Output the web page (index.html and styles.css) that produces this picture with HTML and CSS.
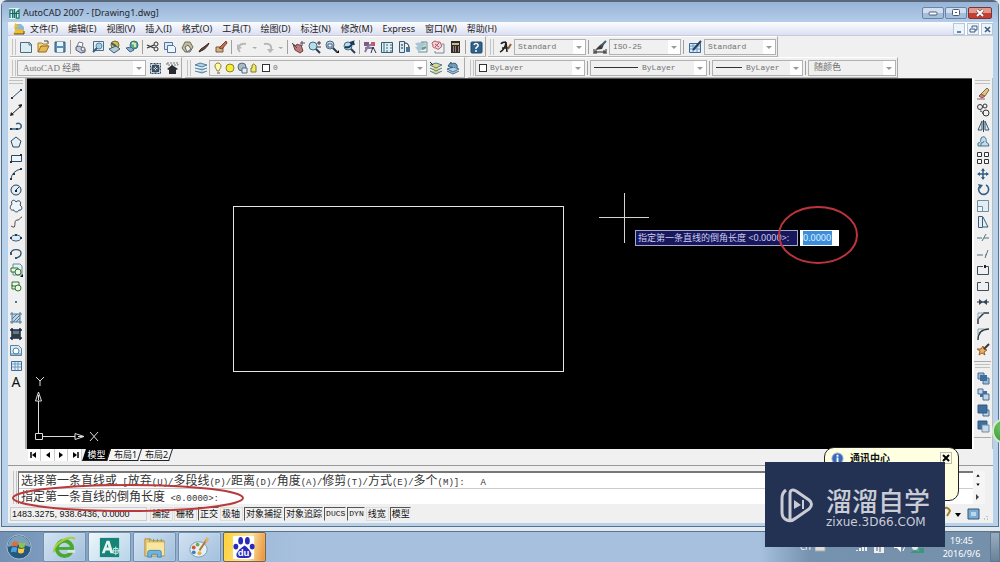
FILE: index.html
```html
<!DOCTYPE html>
<html lang="zh-CN">
<head>
<meta charset="utf-8">
<title>AutoCAD 2007 - [Drawing1.dwg]</title>
<link rel="stylesheet" href="styles.css">
</head>
<body>
<main class="window">
  <header class="titlebar">
    <svg class="app-icon" viewBox="0 0 12 12"><rect width="12" height="12" fill="#e6f1ef"/><path d="M1 11V2h3v9M6 1v10M8 5l3-3v9H8z" fill="none" stroke="#19796f" stroke-width="1.5"/><path d="M1 6h10" stroke="#195d63"/></svg>
    <h1>AutoCAD 2007 - [Drawing1.dwg]</h1>
    <div class="window-buttons">
      <button aria-label="最小化"><svg viewBox="0 0 12 8"><rect x="2" y="3" width="8" height="3" rx="1" fill="#fff" stroke="#4a5c74"/></svg></button>
      <button aria-label="最大化"><svg viewBox="0 0 12 8"><rect x="2.500" y=".5" width="7" height="6" rx="1" fill="#fff" stroke="#4a5c74"/><rect x="5" y="3" width="2" height="1" fill="#4a5c74"/></svg></button>
      <button class="close" aria-label="关闭"><svg viewBox="0 0 12 8"><path d="M3 1l6 6M9 1L3 7" stroke="#5c3038" stroke-width="3"/><path d="M3 1l6 6M9 1L3 7" stroke="#fff" stroke-width="2"/></svg></button>
    </div>
  </header>

  <nav class="menubar">
    <svg class="doc-icon" viewBox="0 0 12 12"><path d="M2 1h6l3 3v7H2z" fill="#8db8ce"/><path d="M2 0l4 3-5 3zM0 11l3-5 8 1v4z" fill="#f1bc28"/><path d="M1 11h10V8" fill="none" stroke="#584522"/></svg>
    <button>文件(F)</button><button>编辑(E)</button><button>视图(V)</button><button>插入(I)</button><button>格式(O)</button><button>工具(T)</button><button>绘图(D)</button><button>标注(N)</button><button>修改(M)</button><button>Express</button><button>窗口(W)</button><button>帮助(H)</button>
    <div class="doc-buttons">
      <button aria-label="最小化文档"><svg viewBox="0 0 10 10"><path d="M3 8h4" stroke="#3e5a80" stroke-width="1.500"/></svg></button>
      <button aria-label="还原文档"><svg viewBox="0 0 10 10"><path d="M4 4V2h5v4H7M2 5h5v3H2z" fill="none" stroke="#3e5a80"/></svg></button>
      <button aria-label="关闭文档"><svg viewBox="0 0 10 10"><path d="M3 3l5 5M8 3L3 8" stroke="#3e5a80" stroke-width="1.500"/></svg></button>
    </div>
  </nav>

  <div class="toolbar-row">
    <div class="toolbar">
      <i class="grip"></i>
      <button aria-label="新建"><svg viewBox="0 0 16 16"><path d="M2.500 3.500h9l2 2v8h-11z" fill="#dcecf3" stroke="#486c84"/><path d="M11 3v3h3" fill="none" stroke="#486c84"/></svg></button>
      <button aria-label="打开"><svg viewBox="0 0 16 16"><path d="M3 13V4h4l1 1h4v2" fill="#f4d77d" stroke="#a5802f"/><path d="M3 13l3-6h8l-3 6z" fill="#e5b955" stroke="#8f6a24"/><path d="M9 2h4v3" fill="none" stroke="#444"/></svg></button>
      <button aria-label="保存"><svg viewBox="0 0 16 16"><path d="M3 3h10v10H3z" fill="#5a91b4" stroke="#315d80"/><path d="M5 3h6v4H5zM5 9h6v4H5z" fill="#e8f3f8"/></svg></button>
      <i class="sep"></i>
      <button aria-label="打印"><svg viewBox="0 0 16 16"><path d="M4 7l2-4 4 1-1 4" fill="#fff" stroke="#778"/><path d="M3 8l3-1 6 3v3l-4 1-5-3z" fill="#c8ccda" stroke="#535a73"/><circle cx="10" cy="10" r="2" fill="#e4e9f1" stroke="#60687f"/></svg></button>
      <button aria-label="打印预览"><svg viewBox="0 0 16 16"><path d="M3.500 2.500h10v9h-10z" fill="#e2eef7" stroke="#4a6c8c"/><circle cx="9" cy="7" r="3" fill="#a6cee2" stroke="#5b86a3"/><path d="M7 9l-4 4" stroke="#315d80" stroke-width="2"/></svg></button>
      <button aria-label="发布"><svg viewBox="0 0 16 16"><circle cx="8" cy="6" r="4" fill="#d5bd48" stroke="#736a35"/><path d="M2 10l7-3 4 3-6 4z" fill="#b4cbd8" stroke="#395c78"/><path d="M4 4l5 3" stroke="#395c78" stroke-width="2"/></svg></button>
      <button aria-label="三维 DWF"><svg viewBox="0 0 16 16"><circle cx="10" cy="6" r="4" fill="#58a59c" stroke="#39717b"/><path d="M8 4l3 1v3" stroke="#d9ed9a" stroke-width="2" fill="none"/><path d="M2 9l5-1 3 3-4 2z" fill="#8bafd0" stroke="#446688"/></svg></button>
      <i class="sep"></i>
      <button aria-label="剪切"><svg viewBox="0 0 16 16"><path d="M2 6l7 3M2 9l7-3" stroke="#333" stroke-width="1.300"/><circle cx="11" cy="5" r="2" fill="none" stroke="#333"/><circle cx="11" cy="10" r="2" fill="none" stroke="#333"/></svg></button>
      <button aria-label="复制"><svg viewBox="0 0 16 16"><path d="M2.500 3.500h8v7h-8z" fill="#dbe9f6" stroke="#4f76a2"/><path d="M5.500 6.500h6l2 2v5h-8z" fill="#eff6fb" stroke="#4f76a2"/></svg></button>
      <button aria-label="粘贴"><svg viewBox="0 0 16 16"><path d="M3 9l3-6h5l3 5-3 5H6z" fill="#c5bd91" stroke="#6c7158"/><path d="M6 8l3-2 3 4-4 3z" fill="#e8eef2" stroke="#667"/></svg></button>
      <button aria-label="特性匹配"><svg viewBox="0 0 16 16"><path d="M3 13c1-3 3-4 5-5l5-4c-1 3-4 6-6 7z" fill="#6b4b37" stroke="#2f2824"/></svg></button>
      <button aria-label="块编辑器"><svg viewBox="0 0 16 16"><path d="M3 8h7v5H3z" fill="#d2b48d" stroke="#805438"/><path d="M6 9l7-7 1 2-5 6z" fill="#bd7247" stroke="#78442f"/></svg></button>
      <i class="sep"></i>
      <button aria-label="放弃"><svg viewBox="0 0 16 16"><path d="M6 13c-4-5 0-9 6-8" fill="none" stroke="#b8b8b8" stroke-width="2"/><path d="M3 5v6l5-2z" fill="#b8b8b8"/></svg></button>
      <button class="drop" aria-label="放弃列表"><svg viewBox="0 0 8 16"><path d="M1 8h5L4 10z" fill="#aaa"/></svg></button>
      <button aria-label="重做"><svg viewBox="0 0 16 16"><path d="M4 5c6-1 9 2 6 8" fill="none" stroke="#b8b8b8" stroke-width="2"/><path d="M7 10l3 4 4-4z" fill="#b8b8b8"/></svg></button>
      <button class="drop" aria-label="重做列表"><svg viewBox="0 0 8 16"><path d="M1 8h5L4 10z" fill="#aaa"/></svg></button>
      <i class="sep"></i>
      <button aria-label="实时平移"><svg viewBox="0 0 16 16"><path d="M3 5l3 2 1-2 2 1 2 0 2 6-3 2-5-3z" fill="#ba7d78" stroke="#733f43"/><path d="M10 4h5M12 2v5M2 4l5 5" stroke="#584568"/></svg></button>
      <button aria-label="实时缩放"><svg viewBox="0 0 16 16"><circle cx="6" cy="7" r="4" fill="#b6ddeb" stroke="#446984"/><path d="M9 10l4 4" stroke="#263e55" stroke-width="2"/><path d="M10 4h4M12 2v4M10 8h4" stroke="#333"/></svg></button>
      <button aria-label="窗口缩放"><svg viewBox="0 0 16 16"><circle cx="6" cy="6" r="4" fill="#b6ddeb" stroke="#446984"/><path d="M4 5h4v3H4z" fill="#fff" stroke="#557"/><path d="M9 9l4 4" stroke="#263e55" stroke-width="2"/><path d="M15 11v3h-3z" fill="#111"/></svg></button>
      <button aria-label="缩放上一个"><svg viewBox="0 0 16 16"><circle cx="7" cy="7" r="4" fill="#b6ddeb" stroke="#446984"/><path d="M10 10l4 4" stroke="#263e55" stroke-width="2"/><path d="M4 8c3 1 6 0 8-5l-3 1M12 3l1 3" fill="none" stroke="#18375c" stroke-width="2"/></svg></button>
      <i class="sep"></i>
      <button aria-label="特性"><svg viewBox="0 0 16 16"><path d="M2 3h5v4H2z" fill="#7c5b86"/><path d="M9 3h4v4H9z" fill="#c9545e"/><path d="M3 9l9 0M3 13l3-6 5-2" stroke="#8b789f" stroke-width="2" fill="none"/><path d="M9 14l2-6 3 6" fill="none" stroke="#233650"/></svg></button>
      <button aria-label="设计中心"><svg viewBox="0 0 16 16"><path d="M2.500 3.500h11v10h-11z" fill="#e2edf0" stroke="#2c6177"/><path d="M5 4v9M7 6h2M11 6h2M7 9h2M11 9h2M7 12h2M11 12h2" stroke="#326c80"/></svg></button>
      <button aria-label="工具选项板"><svg viewBox="0 0 16 16"><path d="M3.500 2.500h5v11h-5z" fill="#d9eaf2" stroke="#315d80"/><path d="M9 4q4 0 4 5M5 6h2M5 9h2" fill="none" stroke="#222"/><path d="M10 8h4v5h-4z" fill="#4b769a"/></svg></button>
      <button aria-label="图纸集"><svg viewBox="0 0 16 16"><path d="M2 4l9-1 3 3-9 2zM2 8l8-1 3 3-8 2z" fill="#a7c6d5"/><path d="M8 3h6v10H5" fill="none" stroke="#688d99"/><path d="M9 10l4-2" stroke="#6e9865" stroke-width="2"/></svg></button>
      <button aria-label="标记集"><svg viewBox="0 0 16 16"><path d="M3 3q2-2 4 0 4-1 4 2 2 3-1 4-2 3-4 0-4 0-3-3-2-2 0-3z" fill="#f1d5d8" stroke="#b45160"/><path d="M5 5l4 3M9 4L5 8" stroke="#b45160"/><path d="M12 5h2v9H5v-2" fill="none" stroke="#7a8c9c"/></svg></button>
      <button aria-label="计算器"><svg viewBox="0 0 16 16"><path d="M4 2h9v12H4z" fill="#352b2b"/><path d="M5 4h7v2H5z" fill="#c1c57a"/><path d="M6 8h1M8 8h1M11 8h1M6 10h1M8 10h1M11 10h1M6 12h1M8 12h1M11 12h1" stroke="#eadfd5"/></svg></button>
      <i class="sep"></i>
      <button aria-label="帮助"><svg viewBox="0 0 16 16"><rect x="3" y="3" width="11" height="11" rx="1" fill="#2d638b" stroke="#214967"/><path d="M6 6c1-3 5-1 4 1L8 9v1M8 11v2" fill="none" stroke="#fff" stroke-width="1.500"/></svg></button>
    </div>
    <div class="toolbar styles-bar">
      <i class="grip"></i>
      <button aria-label="文字样式"><svg viewBox="0 0 16 16"><path d="M3 13c3-1 6-6 6-10l1 10M4 5c1-2 3-2 5-2M5 9h6" fill="none" stroke="#222" stroke-width="1.600"/><path d="M11 10l3-5" stroke="#965d34" stroke-width="2"/></svg></button>
      <label class="combo"><select aria-label="文字样式"><option>Standard</option></select></label>
      <i class="sep"></i>
      <button aria-label="标注样式管理器"><svg viewBox="0 0 16 16"><path d="M2 10v5M14 10v5M2 13h12M4 11v4M12 11v4" stroke="#222"/><path d="M3 11l5-5 5-3-3 7z" fill="#3b3b3b"/><path d="M9 7l5-5" stroke="#3b607c" stroke-width="2"/></svg></button>
      <label class="combo"><select aria-label="标注样式"><option>ISO-25</option></select></label>
      <i class="sep"></i>
      <button aria-label="表格样式管理器"><svg viewBox="0 0 16 16"><path d="M2.500 4.500h11v9h-11z" fill="#dbeaf7" stroke="#3a6ba0"/><path d="M3 7h10M6 5v8M10 5v8M3 10h10" stroke="#709ac3"/><path d="M6 11l8-9" stroke="#24425d" stroke-width="2"/></svg></button>
      <label class="combo"><select aria-label="表格样式"><option>Standard</option></select></label>
    </div>
  </div>

  <div class="toolbar-row layer-row">
    <div class="toolbar">
      <i class="grip"></i>
      <label class="combo workspace cjk"><select aria-label="工作空间"><option>AutoCAD 经典</option></select></label>
      <button aria-label="工作空间设置"><svg viewBox="0 0 16 16"><path d="M3.500 3.500h10v10h-10z" fill="#d0dce5" stroke="#34495b" stroke-dasharray="2 1"/><circle cx="8.500" cy="8.500" r="3" fill="none" stroke="#34495b" stroke-width="2"/><path d="M5 5l7 7M12 5l-7 7" stroke="#34495b"/></svg></button>
      <button aria-label="我的工作空间"><svg viewBox="0 0 16 16"><path d="M3 3h11v2H3z" fill="none" stroke="#777" stroke-dasharray="2 1"/><path d="M3 9l5-4 6 4-2 1v4H5v-4z" fill="#272b30"/></svg></button>
    </div>
    <div class="toolbar layers-bar">
      <i class="grip"></i>
      <button aria-label="图层特性管理器"><svg viewBox="0 0 16 16"><path d="M2 5l5-2 7 2-5 2zM2 8l7 2 5-2M2 11l7 2 5-2" fill="#b2d1e2" stroke="#4c82a8"/></svg></button>
      <label class="combo layer">
        <svg viewBox="0 0 50 12"><path d="M5 9c0-2-2-2-2-5 0-4 6-4 6 0 0 3-2 3-2 5z" fill="#fffaa8" stroke="#927e32"/><path d="M5 11h3" stroke="#555"/><circle cx="18" cy="6" r="4" fill="#f5ed38" stroke="#8b8427"/><circle cx="30" cy="5" r="4" fill="#a9bac4" stroke="#536b7d"/><path d="M30 6h5v5h-5z" fill="#e4edf2" stroke="#536b7d"/><path d="M40 6V4q1-4 4 0v6h-5V6z" fill="#efea61" stroke="#7b7a32"/></svg>
        <i class="swatch"></i>
        <select aria-label="图层"><option>0</option></select>
      </label>
      <button aria-label="将对象的图层置为当前"><svg viewBox="0 0 16 16"><path d="M2 5l6-2 6 2-6 3zM2 8l6 3 6-3M2 11l6 3 6-3" fill="#dbd987" stroke="#547a82"/><path d="M2 2l3 3" stroke="#222"/></svg></button>
      <button aria-label="上一个图层"><svg viewBox="0 0 16 16"><path d="M2 9l6-2 6 2-6 3zM2 11l6 3 6-3" fill="#b2d1e2" stroke="#446f92"/><path d="M12 8c1-4-2-6-6-4V2L3 6l4 2V6" fill="#6e9dba" stroke="#315873"/></svg></button>
    </div>
    <div class="toolbar props-bar">
      <i class="grip"></i>
      <label class="combo color"><i class="swatch"></i><select aria-label="颜色"><option>ByLayer</option></select></label>
      <i class="sep"></i>
      <label class="combo linetype"><i class="line"></i><select aria-label="线型"><option>ByLayer</option></select></label>
      <i class="sep"></i>
      <label class="combo weight"><i class="line short"></i><select aria-label="线宽"><option>ByLayer</option></select></label>
      <i class="sep"></i>
      <label class="combo plot cjk"><select aria-label="打印样式"><option>随颜色</option></select></label>
    </div>
  </div>

  <section class="workspace-area">
    <aside class="side-tools left">
      <i class="grip-h"></i>
      <button aria-label="直线"><svg viewBox="0 0 16 16"><path d="M4 12l9-8" stroke="#33506b"/><path d="M3 11h2v2H3zM12 3h2v2h-2z" fill="#23384d"/></svg></button>
      <button aria-label="构造线"><svg viewBox="0 0 16 16"><path d="M3 13L14 3" stroke="#222"/><path d="M2 14l1-4 3 3zM14 2l-1 4-3-3z" fill="#222"/></svg></button>
      <button aria-label="多段线"><svg viewBox="0 0 16 16"><path d="M3 11h8q3-1 2-4-2-3-5-1" fill="none" stroke="#316287" stroke-width="1.500"/><path d="M2 10h2v2H2zM8 10h2v2H8z" fill="#23384d"/></svg></button>
      <button aria-label="正多边形"><svg viewBox="0 0 16 16"><path d="M8 3l5 4-2 6H5L3 7z" fill="#e4eff5" stroke="#2d485d"/></svg></button>
      <button aria-label="矩形"><svg viewBox="0 0 16 16"><path d="M3.500 5.500h10v6h-10z" fill="#edf5fa" stroke="#2d485d"/><path d="M2 11h2v2H2zM12 4h2v2h-2z" fill="#1d3044"/></svg></button>
      <button aria-label="圆弧"><svg viewBox="0 0 16 16"><path d="M3 13Q4 5 13 3" fill="none" stroke="#2d485d"/><path d="M2 12h2v2H2zM5 7h2v2H5zM12 2h2v2h-2z" fill="#23384d"/></svg></button>
      <button aria-label="圆"><svg viewBox="0 0 16 16"><circle cx="8" cy="8" r="5" fill="#e1edf5" stroke="#263f57"/><path d="M8 8l3-3" stroke="#263f57"/><path d="M7 8h2v2H7z" fill="#123"/></svg></button>
      <button aria-label="修订云线"><svg viewBox="0 0 16 16"><path d="M4 6C2 2 7 1 8 4c3-3 6 0 4 3 3 2 2 6-1 5-1 3-5 2-5 0-4 1-5-3-2-6z" fill="#edf5fa" stroke="#2d485d"/></svg></button>
      <button aria-label="样条曲线"><svg viewBox="0 0 16 16"><path d="M3 12c7 5 1-7 7-6 2 0 2-3 4-3" fill="none" stroke="#5a4444"/></svg></button>
      <button aria-label="椭圆"><svg viewBox="0 0 16 16"><ellipse cx="8" cy="8" rx="5" ry="3" fill="#ddecf6" stroke="#2d5b7d"/><path d="M2 7h2v2H2zM12 7h2v2h-2zM7 4h2v2H7z" fill="#223c58"/></svg></button>
      <button aria-label="椭圆弧"><svg viewBox="0 0 16 16"><path d="M3 7c1-5 10-4 10 0q0 4-5 5" fill="none" stroke="#345978" stroke-width="1.400"/><path d="M2 6h2v3H2zM7 11h2v2H7z" fill="#345978"/></svg></button>
      <button aria-label="插入块"><svg viewBox="0 0 16 16"><path d="M5 2h7l2 2v9H5z" fill="#e4f0f4" stroke="#648ba3"/><path d="M3 6h7v4H3z" fill="#edf6e7" stroke="#2d732d"/><circle cx="10" cy="10" r="3" fill="#edf6e7" stroke="#2d732d"/><path d="M15 12v3h-3z" fill="#111"/></svg></button>
      <button aria-label="创建块"><svg viewBox="0 0 16 16"><path d="M4 4h7v4H4z" fill="#edf6e7" stroke="#2d732d"/><circle cx="10" cy="10" r="3" fill="#edf6e7" stroke="#2d732d"/><path d="M4 7v4h3" fill="none" stroke="#2d732d"/></svg></button>
      <button aria-label="点"><svg viewBox="0 0 16 16"><path d="M7 7h2v2H7z" fill="#417b8c"/></svg></button>
      <button aria-label="图案填充"><svg viewBox="0 0 16 16"><path d="M4 4h8v8H4z" fill="#bbd5e5"/><path d="M4 2v12M12 2v12M2 4h12M2 12h12M5 12l7-7M4 9l5-5M8 12l4-4" stroke="#507894"/></svg></button>
      <button aria-label="渐变色"><svg viewBox="0 0 16 16"><path d="M4 4h8v8H4z" fill="#66798a"/><path d="M4 2v12M12 2v12M2 4h12M2 12h12" stroke="#1c2837" stroke-width="1.500"/><path d="M4 8h8v4H4z" fill="#2c3b4a"/></svg></button>
      <button aria-label="面域"><svg viewBox="0 0 16 16"><path d="M2.500 3.500h8l3 3v7h-11z" fill="#d9eaf5" stroke="#5483a3"/><circle cx="8" cy="9" r="3" fill="#fff" stroke="#5483a3"/><path d="M3 12h10" stroke="#5483a3"/></svg></button>
      <button aria-label="表格"><svg viewBox="0 0 16 16"><path d="M3.500 3.500h10v9h-10z" fill="#e3eff7" stroke="#3f6c9a"/><path d="M4 6h9M4 9h9M7 4v8M10 4v8" stroke="#6d99be"/></svg></button>
      <button class="text-tool" aria-label="多行文字">A</button>
    </aside>

    <div class="canvas">
      <form class="dynamic-input">
        <label for="chamfer">指定第一条直线的倒角长度 &lt;0.0000&gt;:</label>
        <input id="chamfer" type="text" value="0.0000">
      </form>
      <svg class="drawing">
        <rect x="206.500" y="127.500" width="330" height="165" fill="none" stroke="#e4e4e4"/>
        <path d="M572 138.500h50M597.500 114v50" stroke="#d5d5cd"/>
        <ellipse cx="791" cy="156" rx="39" ry="28" fill="none" stroke="#bd353c" stroke-width="2"/>
      </svg>
      <svg class="ucs" viewBox="0 0 80 76">
        <path d="M8.500 60.500h7v6h-7zM11.500 60V28M16 63.500h32M8.500 28l3-9 3 9zM48 60.500l9 3-9 3zM51 63.500h5M11.500 22v5" fill="none" stroke="#ddd"/>
        <path d="M9 4l4 4 4-4M13 8v5M63 59l8 9M71 59l-8 9" fill="none" stroke="#ddd"/>
      </svg>
    </div>

    <aside class="side-tools right">
      <i class="grip-h"></i>
      <button aria-label="删除"><svg viewBox="0 0 16 16"><path d="M4 10l2-2 4 2-3 2z" fill="#d98080" stroke="#8a4646"/><path d="M6 8l6-6 2 2-4 6z" fill="#dfc886" stroke="#806a3c"/><path d="M2 13h8" stroke="#866"/></svg></button>
      <button aria-label="复制对象"><svg viewBox="0 0 16 16"><circle cx="5" cy="5" r="2.500" fill="none" stroke="#333"/><circle cx="10" cy="4" r="2" fill="none" stroke="#333"/><circle cx="11" cy="11" r="3" fill="none" stroke="#333"/><path d="M5 9c2 0 3 1 3 3" fill="none" stroke="#333"/></svg></button>
      <button aria-label="镜像"><svg viewBox="0 0 16 16"><path d="M7 3v9H3zM10 3v9h4z" fill="#dbe9ef" stroke="#345772"/><path d="M8.500 2v12" stroke="#444"/></svg></button>
      <button aria-label="偏移"><svg viewBox="0 0 16 16"><path d="M3 12V9q3 0 3-5c3-3 6 0 5 4q3 1 3 4z" fill="#c5dde8" stroke="#42738f"/><path d="M6 12V9q3 0 3-2" fill="none" stroke="#42738f"/></svg></button>
      <button aria-label="阵列"><svg viewBox="0 0 16 16"><path d="M2.500 2.500h4v4h-4zM9.500 2.500h4v4h-4zM2.500 9.500h4v4h-4zM9.500 9.500h4v4h-4z" fill="#f9fafa" stroke="#333"/></svg></button>
      <button aria-label="移动"><svg viewBox="0 0 16 16"><path d="M8 3v10M3 8h10" stroke="#325e85" stroke-width="1.500"/><path d="M8 2l2 3H6zM8 14l2-3H6zM2 8l3-2v4zM14 8l-3-2v4z" fill="#325e85"/></svg></button>
      <button aria-label="旋转"><svg viewBox="0 0 16 16"><path d="M5 4a5 5 0 1 0 6-1" fill="none" stroke="#315f85" stroke-width="1.600"/><path d="M3 2l5 1-3 4z" fill="#315f85"/></svg></button>
      <button aria-label="缩放"><svg viewBox="0 0 16 16"><path d="M2.500 2.500h11v11h-11z" fill="#e2edf4" stroke="#708da1"/><path d="M2.500 8.500h5v5h-5z" fill="#edf5f8" stroke="#708da1"/></svg></button>
      <button aria-label="拉伸"><svg viewBox="0 0 16 16"><path d="M3.500 2.500h4v11h-4zM8 3l5 10H8" fill="#e6eff4" stroke="#395e7d"/></svg></button>
      <button aria-label="修剪"><svg viewBox="0 0 16 16"><path d="M2 8h5M9 8h5M7 11l4-7" stroke="#517181"/></svg></button>
      <button aria-label="延伸"><svg viewBox="0 0 16 16"><path d="M2 9h6M10 9h1M10 12l3-8" stroke="#517181"/></svg></button>
      <button aria-label="打断于点"><svg viewBox="0 0 16 16"><path d="M8 4.500H2.500v8h11v-8H10" fill="none" stroke="#3d4d5d"/><path d="M9 3h2v3H9z" fill="#223"/></svg></button>
      <button aria-label="打断"><svg viewBox="0 0 16 16"><path d="M6 4.500H2.500v8h11v-8H10" fill="none" stroke="#3d4d5d"/></svg></button>
      <button aria-label="合并"><svg viewBox="0 0 16 16"><path d="M2 8h12" stroke="#222"/><path d="M4 5l4 3-4 3zM12 5L8 8l4 3z" fill="#334658"/></svg></button>
      <button aria-label="倒角"><svg viewBox="0 0 16 16"><path d="M3 14V9l6-6h5" fill="none" stroke="#303d49" stroke-width="1.500"/><path d="M3 9V3h6" fill="none" stroke="#88a2ad"/></svg></button>
      <button aria-label="圆角"><svg viewBox="0 0 16 16"><path d="M3 14q0-11 11-11" fill="none" stroke="#303d49" stroke-width="1.500"/><path d="M3 9V3h6" fill="none" stroke="#88a2ad"/></svg></button>
      <button aria-label="分解"><svg viewBox="0 0 16 16"><path d="M4 13l1-4-3-2 4 0 2-3 1 3 3 1-3 2 1 3-3-2z" fill="#e2b45c" stroke="#9c5a30"/><path d="M9 7l5-5" stroke="#433" stroke-width="2"/></svg></button>
      <div class="order-tools">
        <i class="grip-h"></i>
        <button aria-label="前置"><svg viewBox="0 0 16 16"><path d="M3 3h6v6H3zM8 8h6v6H8z" fill="#9dbbd3" stroke="#466d96"/><path d="M5 5h7v6H5z" fill="#416e9f"/></svg></button>
        <button aria-label="后置"><svg viewBox="0 0 16 16"><path d="M5 5h7v6H5z" fill="#416e9f"/><path d="M3 3h5v5H3zM8 8h6v6H8z" fill="#c1d6e6" stroke="#466d96"/></svg></button>
        <button aria-label="置于对象之上"><svg viewBox="0 0 16 16"><path d="M8 8h6v6H8z" fill="#c1d6e6" stroke="#466d96"/><path d="M3 3h9v8H3z" fill="#416e9f" stroke="#315a82"/></svg></button>
        <button aria-label="置于对象之下"><svg viewBox="0 0 16 16"><path d="M3 3h9v8H3z" fill="#416e9f" stroke="#315a82"/><path d="M7 7h7v7H7z" fill="#c9dce9" stroke="#708ca5"/></svg></button>
      </div>
    </aside>
  </section>

  <div class="layout-tabs">
    <div class="tab-nav">
      <button aria-label="第一个"><svg viewBox="0 0 8 8"><path d="M1 1v6" stroke="#000" stroke-width="1.500"/><path d="M6 1v6L2 4z"/></svg></button>
      <button aria-label="上一个"><svg viewBox="0 0 8 8"><path d="M6 1v6L2 4z"/></svg></button>
      <button aria-label="下一个"><svg viewBox="0 0 8 8"><path d="M2 1v6l4-3z"/></svg></button>
      <button aria-label="最后一个"><svg viewBox="0 0 8 8"><path d="M2 1v6l4-3z"/><path d="M7 1v6" stroke="#000" stroke-width="1.500"/></svg></button>
    </div>
    <button class="tab active">模型</button><button class="tab">布局1</button><button class="tab">布局2</button>
  </div>

  <section class="command">
    <i class="grip"></i>
    <div class="command-lines">
      <p class="history">选择第一条直线或<span> [</span>放弃<span>(U)/</span>多段线<span>(P)/</span>距离<span>(D)/</span>角度<span>(A)/</span>修剪<span>(T)/</span>方式<span>(E)/</span>多个<span>(M)]:</span><span class="answer">A</span></p>
      <p class="prompt">指定第一条直线的倒角长度<span> &lt;0.0000&gt;:</span></p>
      <svg class="mark" viewBox="0 0 234 30"><ellipse cx="117" cy="15" rx="115" ry="13" fill="none" stroke="#b9393c" stroke-width="2"/></svg>
    </div>
    <div class="scroller">
      <svg viewBox="0 0 10 24"><path d="M5 4l2 3H3zM5 18l2-3H3z"/></svg>
      <svg viewBox="0 0 10 12"><path d="M3 3l3 3-3 3z" fill="#444"/></svg>
    </div>
  </section>

  <footer class="status">
    <output>1483.3275, 938.6436, 0.0000</output>
    <div class="modes">
      <button>捕捉</button><button>栅格</button><button class="on">正交</button><button>极轴</button><button class="on">对象捕捉</button><button class="on">对象追踪</button><button class="on mono">DUCS</button><button class="on mono">DYN</button><button>线宽</button><button class="on">模型</button>
    </div>
    <div class="status-tray">
      <svg viewBox="0 0 50 16"><path d="M2 3q5-3 7 2l-3 5" fill="none" stroke="#a17f25" stroke-width="2"/><path d="M14 7h6l-3 4z"/><path d="M27 3h11v10H27z" fill="#7eaad0" stroke="#2e567f"/><path d="M30 6h5v4h-5z" fill="#b9d7ed"/><path d="M43 13h1M46 10v1M46 13h1" stroke="#999"/></svg>
    </div>
  </footer>
</main>

<footer class="taskbar">
  <button class="start" aria-label="开始"><svg viewBox="0 0 28 28"><circle cx="14" cy="14" r="13" fill="#28577e" stroke="#a9c4d8"/><path d="M2 14a12 12 0 0 1 24 0q-12-5-24 0z" fill="#7d9fb7"/><path d="M7 9q3-2 6 0l-1 5q-3-2-6 0z" fill="#e56b36"/><path d="M14 9q4 2 7 0l-1 5q-3 2-6 0z" fill="#8cc448"/><path d="M6 15q3-2 6 0l-1 5q-3-2-6 0z" fill="#45a4de"/><path d="M13 15q3 2 7 0l-1 5q-3 2-6 0z" fill="#f9cb3d"/></svg></button>
  <button class="task" aria-label="浏览器"><svg viewBox="0 0 26 26"><circle cx="13" cy="14" r="8" fill="none" stroke="#4aa82e" stroke-width="4"/><path d="M6 14h14" stroke="#4aa82e" stroke-width="3"/><path d="M16 17h8" stroke="#d7e4ee" stroke-width="3"/><path d="M2 18C1 9 18 0 24 4" fill="none" stroke="#a8cf3d" stroke-width="2"/></svg></button>
  <button class="task current" aria-label="AutoCAD"><svg viewBox="0 0 26 26"><path d="M3 3h20v20H3z" fill="#168278"/><path d="M5 19L10 6h3l4 13h-3l-1-3H9l-1 3zM10 13h2l-1-4z" fill="#e5f3ee"/><path d="M17 14h5v5h-5zM19.500 12v9M15 16.500h9" stroke="#c8ebe3" fill="none"/></svg></button>
  <button class="task" aria-label="资源管理器"><svg viewBox="0 0 26 26"><path d="M3 4h6l1 2h13v16H3z" fill="#e9c669" stroke="#b2944d"/><path d="M5 8h18v13H5z" fill="#f8e69f"/><path d="M8 4v3M12 4v3M16 4v3M20 4v3" stroke="#6c9b7d"/><path d="M6 23v-5q0-2 2-2h10q2 0 2 2v5h-4v-3h-6v3z" fill="#71b4de" stroke="#4787b4"/></svg></button>
  <button class="task" aria-label="画图"><svg viewBox="0 0 26 26"><ellipse cx="12" cy="15" rx="9" ry="8" fill="#e5eff6" stroke="#799bb6"/><circle cx="7" cy="13" r="2" fill="#d9542d"/><circle cx="11" cy="10" r="2" fill="#69ae4e"/><circle cx="7" cy="18" r="2" fill="#3e7ec1"/><circle cx="13" cy="19" r="2" fill="#e4b53e"/><path d="M13 16L21 4" stroke="#b87835" stroke-width="2"/><path d="M19 7l1-5 3 2-2 4z" fill="#dfb272"/></svg></button>
  <button class="task baidu" aria-label="百度"><svg viewBox="0 0 26 26"><path d="M1 1h22v24H1z" fill="#fff"/><g fill="#2929bd"><ellipse cx="9" cy="6" rx="2.500" ry="4"/><ellipse cx="16" cy="6" rx="2.500" ry="4"/><ellipse cx="4" cy="12" rx="2.500" ry="3"/><ellipse cx="21" cy="12" rx="2.500" ry="3"/><path d="M13 11q4 2 7 8 1 5-5 5H9q-6 0-4-5 2-4 8-8z"/></g><text x="12" y="22" class="paw-text">du</text></svg></button>
  <div class="tray">
    <span class="ime">CH</span>
    <svg viewBox="0 0 125 16"><path d="M0 6h10v6H0z" fill="#ddd" stroke="#aaa"/><path d="M29 7l3-3 3 3zM42 12v-1M45 12V9M48 12V7M51 12V4M60 4h8v9h-8z" fill="#eee" stroke="#eee" stroke-width="2"/><path d="M62 12V7h3v6" stroke="#567" fill="none"/><path d="M79 7h3l4-4v10l-4-4h-3z" fill="#fff"/><path d="M88 5q3 3 0 7" stroke="#fff" fill="none"/><circle cx="100" cy="8" r="3" fill="#ddeee5"/><path d="M95 14q5-5 10 0zM104 9h5v5h-5z" fill="#389879"/></svg>
    <time><span>19:45</span><span>2016/9/6</span></time>
    <button class="show-desktop" aria-label="显示桌面"></button>
  </div>
</footer>

<aside class="balloon">
  <svg viewBox="0 0 14 14"><circle cx="7" cy="7" r="6" fill="#3d67ba" stroke="#9db3d8"/><path d="M7 3v2M7 6v5" stroke="#fff" stroke-width="2"/></svg>
  <strong>通讯中心</strong>
  <button aria-label="关闭通知"><svg viewBox="0 0 10 10"><path d="M2 2l6 6M8 2L2 8" stroke="#000" stroke-width="2"/></svg></button>
</aside>
<aside class="brand">
  <svg viewBox="0 0 36 38"><path d="M11 34V8q0-6 6-3l13 9q5 4 0 9l-13 9q-6 5-11 1-3-2-3-7V12q0-5 4-8" fill="none" stroke="#c9ccd5" stroke-width="3" stroke-linejoin="round"/><path d="M15 14v9l7-4z" fill="#c9ccd5"/><path d="M24 14v9" stroke="#c9ccd5" stroke-width="2"/></svg>
  <div><b>溜溜自学</b><span>zixue.3D66.COM</span></div>
</aside>
<i class="side-ball"></i>
</body>
</html>
```
FILE: styles.css
```css
* { box-sizing: border-box; }
body {
  margin: 0;
  min-height: 100vh;
  display: flex;
  flex-direction: column;
  position: relative;
  overflow: hidden;
  background: #e4e9ed;
  color: #222;
  font: 9px/12px "Noto Sans", "Noto Sans CJK SC", sans-serif;
}
h1, p { margin: 0; font-weight: normal; }
button, select, input { font: inherit; color: inherit; margin: 0; padding: 0; border: 0; background: none; border-radius: 0; }
button { display: flex; align-items: center; justify-content: center; white-space: nowrap; }
svg { display: block; flex: none; }
i { flex: none; }

.window {
  flex: 1;
  display: flex;
  flex-direction: column;
  margin: 0 1px 4px;
  padding: 0 5px 3px 6px;
  border: 1px solid #58718c;
  border-top: 2px solid #58687a;
  border-radius: 6px 6px 0 0;
  background: #b7d2ea;
}

.titlebar {
  display: flex;
  align-items: center;
  gap: 3px;
  height: 20px;
  margin: 0 -5px 0 -6px;
  padding: 2px 6px 0 7px;
  background: linear-gradient(#97b3d6, #b3cce8);
}
.app-icon { width: 11px; height: 11px; }
.titlebar h1 { font-size: 9px; line-height: 14px; color: #20262e; }
.window-buttons { display: flex; margin-left: auto; align-self: flex-start; gap: 1px; padding-top: 3px; }
.window-buttons button { width: 22px; height: 12px; border: 1px solid #6b84a5; border-radius: 2px; background: linear-gradient(#d0def0 50%, #a4bedb 50%); }
.window-buttons .close { width: 24px; border-color: #7c3237; background: linear-gradient(#e09a8c 45%, #c23f31 50%); }
.window-buttons svg { width: 12px; height: 8px; }

.menubar {
  display: flex;
  align-items: center;
  gap: 10px;
  height: 14px;
  padding-left: 5px;
  background: linear-gradient(#fbfcff, #dcdff2);
  border-bottom: 1px solid #c7cad8;
}
.doc-icon { width: 12px; height: 12px; margin-right: -5px; }
.doc-buttons { display: flex; gap: 2px; margin-left: auto; background: #fff; }
.doc-buttons button { width: 12px; height: 12px; border: 1px solid #b3c6da; background: #edf5fb; }
.doc-buttons svg { width: 10px; height: 10px; }

.toolbar-row { display: flex; height: 21px; padding-left: 2px; gap: 2px; background: #f0f0f0; }
.layer-row { gap: 3px; }
.toolbar { display: flex; align-items: center; padding-right: 1px; border-right: 1px solid #aaa; border-top: 1px solid #fff; border-bottom: 1px solid #b5b5b5; }
.grip { width: 4px; height: 16px; margin: 0 1px 0 2px; border: 1px solid #c4c4c4; border-width: 0 1px; }
.sep { width: 1px; height: 14px; margin: 0 1px 0 2px; background: #a0a0a0; }
.toolbar button { width: 17px; height: 17px; }
.toolbar .drop { width: 9px; }
.toolbar svg, .side-tools svg { width: 16px; height: 16px; }
.toolbar .drop svg { width: 8px; }
.styles-bar { gap: 1px; }
.styles-bar .sep { margin: 0 1px; }

.combo {
  position: relative;
  display: flex;
  align-items: center;
  width: 72px;
  height: 16px;
  padding-left: 3px;
  border: 1px solid #b1b1b1;
  background: #f0f0f0;
  color: #707070;
}
.combo::after {
  content: "";
  position: absolute;
  right: 3px;
  top: 6px;
  border: 3px solid transparent;
  border-top-color: #999;
  border-bottom-width: 0;
}
.combo::before { content: ""; position: absolute; right: 0; top: 0; width: 12px; height: 100%; background: #fff; }
.combo select { appearance: none; flex: 1; min-width: 0; font: 8px/12px "Liberation Mono", "Noto Sans CJK SC", monospace; }
.combo.cjk select { font-size: 9px; }
.workspace { width: 129px; padding-left: 5px; }
.workspace.cjk select { font-family: "Liberation Serif", "Noto Sans CJK SC", serif; }
.toolbar .layer svg { width: 50px; height: 12px; margin-left: -1px; }
.layer { width: 218px; }
.swatch { width: 8px; height: 8px; margin-right: 3px; border: 1px solid #333; background: #fff; }
.line { width: 44px; height: 1px; margin-right: 4px; background: #333; }
.line.short { width: 26px; }
.layers-bar { padding-right: 3px; }
.props-bar .sep { margin: 0 2px; }
.color { width: 110px; }
.linetype { width: 117px; }
.weight { width: 91px; }
.plot { width: 88px; padding-left: 5px; }

.workspace-area { flex: 1; display: flex; min-height: 0; background: #f0f0f0; }
.side-tools { display: flex; flex-direction: column; width: 19px; padding-right: 1px; border-right: 2px solid #aaa; }
.side-tools button { width: 100%; height: 16px; flex: none; }
.grip-h { height: 4px; margin: 2px 1px; border: 1px solid #c0c0c0; border-width: 1px 0; }
.right { width: 21px; border-left: 2px solid #fff; border-right: 1px solid #bbb; }
.order-tools { display: flex; flex-direction: column; margin-top: 3px; border-top: 1px solid #aaa; border-bottom: 1px solid #aaa; padding-bottom: 3px; }
.text-tool { font: 14px/16px "Noto Sans", sans-serif; color: #111; }

.canvas { position: relative; flex: 1; background: #000; overflow: hidden; border-top: 1px solid #555; }
.drawing { position: absolute; left: 0; top: 0; width: 100%; height: 100%; }
.ucs { position: absolute; left: 0; bottom: 0; width: 80px; height: 76px; }
.dynamic-input { position: absolute; left: 608px; top: 151px; display: flex; gap: 2px; height: 16px; }
.dynamic-input label { width: 163px; padding: 1px 2px; border: 1px solid #a7a6cb; background: #17175c; color: #ccccee; white-space: nowrap; }
.dynamic-input input { width: 39px; padding-left: 2px; border: 1px solid #fff; color: #dff3ff; background: linear-gradient(90deg, #fff 2px, #3c8ddb 2px 31px, #fff 31px); }

.layout-tabs { display: flex; height: 17px; padding-left: 20px; background: #f0f0f0; border-bottom: 1px solid #999; align-items: flex-start; }
.tab-nav { display: flex; gap: 1px; width: 54px; height: 12px; margin-right: 1px; background: #fff; }
.tab-nav button { width: 13px; height: 12px; border-right: 1px solid #ccc; }
.tab-nav svg { width: 8px; height: 8px; }
.tab { position: relative; height: 12px; width: 31px; padding: 0 2px; z-index: 0; color: #111; }
.tab.active { width: 27px; color: #fff; }
.tab::before { content: ""; position: absolute; z-index: -1; inset: 0 1px; border-right: 1px solid #222; border-bottom: 1px solid #222; background: #f5f5f5; transform: skewX(-18deg); }
.tab.active::before { background: #000; }

.command { display: flex; height: 39px; padding: 5px 8px 1px 3px; background: #f0f0f0; }
.command .grip { height: auto; }
.command-lines { position: relative; flex: 1; border: 1px solid #777; border-width: 2px 0 0 1px; background: #fff; color: #333; font: 12px/14px "Noto Sans CJK SC", sans-serif; }
.command-lines p { height: 15px; white-space: pre; padding-left: 2px; }
.command-lines span { font: 9px/14px "Liberation Mono", monospace; }
.command-lines .answer { padding-left: 16px; }
.prompt { border-top: 1px solid #ccc; }
.mark { position: absolute; left: -8px; top: 10px; width: 234px; height: 30px; z-index: 1; }
.scroller { width: 12px; display: flex; flex-direction: column; background: #f5f5f5; }
.scroller svg { width: 10px; height: 20px; }
.scroller svg + svg { height: 12px; }

.status { display: flex; align-items: center; height: 18px; padding: 0 2px; background: #f0f0f0; color: #111; }
.status output { width: 137px; height: 14px; padding-left: 1px; border: 1px solid #ccc; font: 9px/12px "Liberation Sans", sans-serif; }
.modes { display: flex; gap: 1px; padding-left: 3px; }
.modes button { height: 14px; padding: 0 2px 0 1px; border: 1px solid #ddd; }
.modes .on { border-color: #555 #eee #eee #555; padding: 0 0 0 1px; }
.modes .mono { font: 8px/12px "Liberation Mono", monospace; }
.status-tray { margin-left: auto; }
.status-tray svg { width: 50px; height: 16px; }

.taskbar { display: flex; gap: 2px; height: 31px; padding-left: 6px; border-top: 1px solid #56738f; background: linear-gradient(90deg, #7391b4 0, #90aed0 130px, #a6c0dd 300px, #a6c0dd 760px, #7592ae 810px, #7590aa); }
.start { width: 26px; margin-right: 9px; }
.start svg { width: 26px; height: 26px; }
.task { width: 43px; border: 1px solid #728fac; border-radius: 2px; background: linear-gradient(135deg, #d2e3f2, #a1bfdc); box-shadow: inset 0 0 1px #fff; }
.task svg { width: 25px; height: 25px; }
.current { background: linear-gradient(135deg, #edf7fb, #b6d4e8); }
.baidu { background: linear-gradient(100deg, #ffd02f, #f8e6a0 60%, #ec8d37); border-color: #74644b; }
.paw-text { font: bold 10px "Liberation Sans", sans-serif; fill: #fff; text-anchor: middle; }
.tray { display: flex; margin-left: auto; align-items: center; color: #fff; }
.ime { padding-right: 4px; font-size: 8px; }
.tray > svg { width: 125px; height: 16px; }
.tray time { display: flex; flex-direction: column; width: 43px; margin-right: 7px; text-align: center; line-height: 13px; }
.show-desktop { width: 10px; height: 100%; border: 1px solid #5f7890; background: linear-gradient(#98adbf, #69839b); }

.balloon { position: absolute; right: 41px; bottom: 61px; width: 135px; height: 54px; display: flex; align-items: flex-start; gap: 6px; padding: 4px 6px; border: 1px solid #222; border-radius: 10px; background: #ffffe1; }
.balloon svg { width: 13px; height: 13px; }
.balloon strong { font-size: 10px; line-height: 12px; color: #111; }
.balloon button { margin-left: auto; width: 12px; height: 12px; border: 1px solid #bbb; }
.balloon button svg { width: 10px; height: 10px; }
.brand { position: absolute; right: 55px; bottom: 15px; width: 180px; height: 85px; display: flex; align-items: center; gap: 11px; padding-left: 14px; background: #233153; color: #c9ccd5; }
.brand > svg { width: 36px; height: 38px; }
.brand div { display: flex; flex-direction: column; }
.brand b { font: 500 26px/34px "Noto Sans CJK SC", sans-serif; }
.brand span { font: 12px/10px "DejaVu Sans", sans-serif; }
.side-ball { position: absolute; right: -18px; bottom: 118px; width: 26px; height: 26px; border: 2px solid #d6eacb; border-radius: 50%; background: radial-gradient(circle at 40% 30%, #71ca63, #278e34); }
```
